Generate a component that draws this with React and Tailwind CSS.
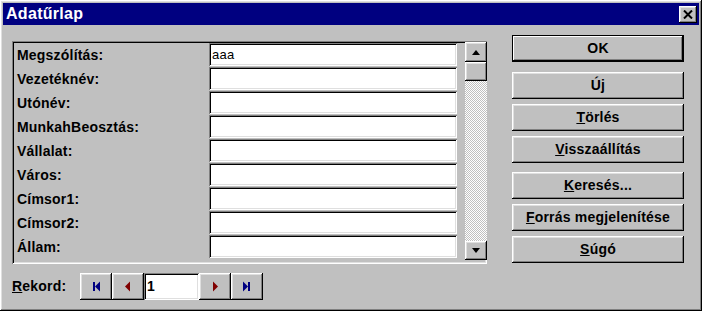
import React from 'react';

const raised =
  'shadow-[inset_-1px_-1px_#000,inset_1px_1px_#fff,inset_-2px_-2px_#808080,inset_2px_2px_#dfdfdf]';
const sunken =
  'shadow-[inset_1px_1px_#808080,inset_-1px_-1px_#fff,inset_2px_2px_#000,inset_-2px_-2px_#dfdfdf]';

const fields = [
  { label: 'Megszólítás:', value: 'aaa' },
  { label: 'Vezetéknév:' },
  { label: 'Utónév:' },
  { label: 'MunkahBeosztás:' },
  { label: 'Vállalat:' },
  { label: 'Város:' },
  { label: 'Címsor1:' },
  { label: 'Címsor2:' },
  { label: 'Állam:' },
];

function Btn({ children, top = '', isDefault }) {
  return (
    <div
      className={`${top} w-[172px] h-[27px] flex items-center justify-center bg-[#c0c0c0] text-black ${
        isDefault
          ? 'shadow-[inset_0_0_0_1px_#000,inset_-2px_-2px_#000,inset_2px_2px_#fff,inset_-3px_-3px_#808080]'
          : raised
      }`}
    >
      {children}
    </div>
  );
}

function NavBtn({ children }) {
  return (
    <div className={`w-[32px] h-[27px] bg-[#c0c0c0] flex items-center justify-center ${raised}`}>
      <svg width="10" height="11" viewBox="0 0 10 11">
        {children}
      </svg>
    </div>
  );
}

export default function App() {
  return (
    <div
      className={`w-[702px] h-[311px] bg-[#c0c0c0] p-[3px] flex flex-col font-['Liberation_Sans',Arial,sans-serif] font-bold text-[14px] tracking-[0.2px] ${raised}`}
    >
      {/* Title bar */}
      <div className="h-[22px] bg-[#000080] flex items-center justify-between pl-[3px] pr-[2px]">
        <span className="text-white text-[16px] tracking-[0.3px]">Adatűrlap</span>
        <div className={`w-[18px] h-[17px] bg-[#c0c0c0] flex items-center justify-center ${raised}`}>
          <svg width="10" height="9" viewBox="0 0 10 9">
            <path d="M1 0.5 L9 8.5 M9 0.5 L1 8.5" stroke="#000" strokeWidth="2" />
          </svg>
        </div>
      </div>

      <div className="flex pl-[9px] pt-[10px]">
        <div className="flex flex-col">
          {/* Field panel */}
          <div className={`mt-[6px] w-[475px] h-[223px] flex pt-[2px] pl-[5px] ${sunken}`}>
            <div className="flex flex-col gap-[1px] w-[444px]">
              {fields.map((f, i) => (
                <div key={i} className="flex items-center h-[23px]">
                  <span className="w-[192px] text-black pt-[2px]">{f.label}</span>
                  <div
                    className={`w-[248px] h-[23px] bg-white flex items-center pl-[3px] font-normal text-[13px] tracking-[0.3px] text-black ${sunken}`}
                  >
                    {f.value}
                  </div>
                </div>
              ))}
            </div>
            {/* Scrollbar */}
            <div className="ml-[4px] mt-[-1px] w-[22px] h-[218px] flex flex-col bg-[repeating-conic-gradient(#c0c0c0_0%_25%,#fff_0%_50%)] bg-[length:2px_2px]">
              <div className={`h-[20px] bg-[#c0c0c0] flex items-center justify-center ${raised}`}>
                <svg width="8" height="5" viewBox="0 0 8 5">
                  <path d="M4 0 L8 5 L0 5 Z" fill="#000" />
                </svg>
              </div>
              <div className={`h-[19px] bg-[#c0c0c0] ${raised}`} />
              <div className="flex-1" />
              <div className={`h-[19px] bg-[#c0c0c0] flex items-center justify-center ${raised}`}>
                <svg width="8" height="5" viewBox="0 0 8 5">
                  <path d="M0 0 L8 0 L4 5 Z" fill="#000" />
                </svg>
              </div>
            </div>
          </div>

          {/* Record navigation */}
          <div className="mt-[9px] flex items-center">
            <span className="w-[68px] text-black">
              <u>R</u>ekord:
            </span>
            <NavBtn>
              <rect x="2" y="1" width="2" height="9" fill="#000080" />
              <path d="M9 0.5 L4 5.5 L9 10.5 Z" fill="#000080" />
            </NavBtn>
            <NavBtn>
              <path d="M7 0.5 L2 5.5 L7 10.5 Z" fill="#800000" />
            </NavBtn>
            <div
              className={`w-[55px] h-[27px] bg-white flex items-center pl-[3px] text-[14px] text-black ${sunken}`}
            >
              1
            </div>
            <NavBtn>
              <path d="M3 0.5 L8 5.5 L3 10.5 Z" fill="#800000" />
            </NavBtn>
            <NavBtn>
              <path d="M1 0.5 L6 5.5 L1 10.5 Z" fill="#000080" />
              <rect x="6" y="1" width="2" height="9" fill="#000080" />
            </NavBtn>
          </div>
        </div>

        {/* Buttons */}
        <div className="ml-[25px] flex flex-col">
          <Btn isDefault>OK</Btn>
          <Btn top="mt-[10px]">Új</Btn>
          <Btn top="mt-[5px]">
            <span>
              <u>T</u>örlés
            </span>
          </Btn>
          <Btn top="mt-[5px]">
            <span>
              <u>V</u>isszaállítás
            </span>
          </Btn>
          <Btn top="mt-[9px]">
            <span>
              <u>K</u>eresés...
            </span>
          </Btn>
          <Btn top="mt-[5px]">
            <span>
              <u>F</u>orrás megjelenítése
            </span>
          </Btn>
          <Btn top="mt-[5px]">
            <span>
              <u>S</u>úgó
            </span>
          </Btn>
        </div>
      </div>
    </div>
  );
}
